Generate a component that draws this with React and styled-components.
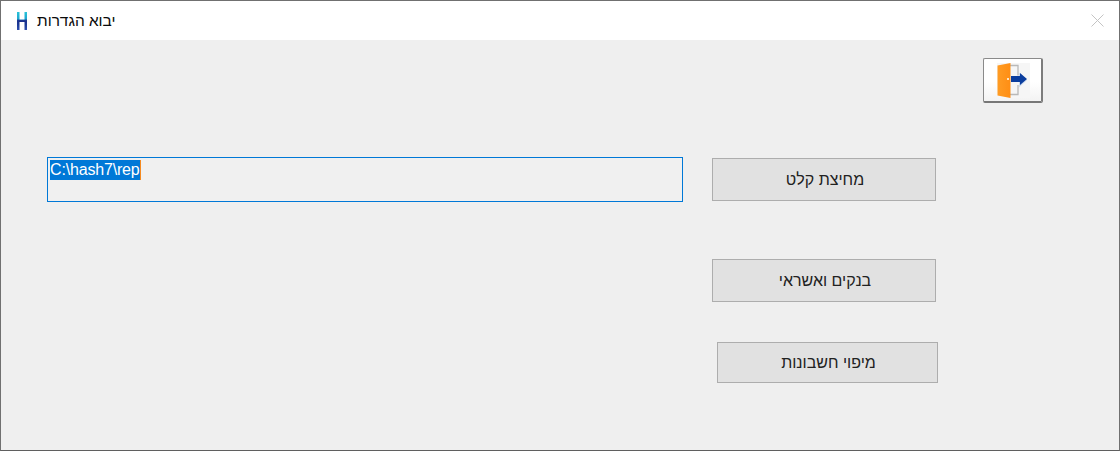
import React from "react";
import styled, { createGlobalStyle } from "styled-components";

const Global = createGlobalStyle`
  html, body { margin: 0; padding: 0; background: #efefef; }
  * { box-sizing: border-box; }
`;

const Win = styled.div`
  width: 1120px;
  height: 451px;
  border: 1px solid #707070;
  border-bottom-color: #5f5f5f;
  background: #efefef;
  display: flex;
  flex-direction: column;
  overflow: hidden;
  font-family: "Liberation Sans", "DejaVu Sans", sans-serif;
`;

const TitleBar = styled.div`
  height: 39px;
  flex: none;
  background: #fff;
  display: flex;
  align-items: center;
  padding: 0 15px 0 14px;
`;

const Logo = styled.svg`
  width: 14px;
  height: 20px;
  flex: none;
  margin-right: 8px;
`;

const Title = styled.div`
  direction: rtl;
  font-size: 15.4px;
  color: #0a0a0a;
  flex: 1;
  text-align: left;
  margin-top: 1px;
`;

const Close = styled.svg`
  width: 13px;
  height: 13px;
  flex: none;
`;

const Body = styled.div`
  flex: 1;
  display: grid;
  grid-template-columns: 636px 224px 1fr;
  grid-template-rows: 45px 43px 58px 43px 40px 41px;
  padding: 18px 0 0 46px;
  column-gap: 29px;
`;

const ExitButton = styled.button`
  grid-column: 3;
  grid-row: 1;
  justify-self: start;
  margin-left: 18px;
  width: 60px;
  height: 45px;
  padding: 0;
  display: flex;
  align-items: center;
  justify-content: center;
  border: 1px solid #8a8a8a;
  border-right: 2px solid #7c7c7c;
  border-bottom: 2px solid #777;
  border-radius: 2px;
  background: linear-gradient(#ffffff 55%, #f3f3f3);
`;

const PathField = styled.div`
  grid-column: 1;
  grid-row: 1 / span 3;
  align-self: start;
  margin-top: 99px;
  height: 45px;
  border: 1px solid #0078d7;
  background: #f0f0f0;
  padding: 2px 2px;
  font-size: 16px;
  line-height: 19px;
  letter-spacing: -0.17px;
`;

const Selected = styled.span`
  display: inline-block;
  background: #0078d7;
  color: #fff;
  height: 20px;
  border-right: 1px solid #f58a1f;
`;

const ActionButton = styled.button`
  grid-column: 2;
  grid-row: ${(p) => p.$row};
  margin-left: ${(p) => p.$shift || 0}px;
  width: ${(p) => p.$w || 224}px;
  height: ${(p) => p.$h || 43}px;
  margin-top: ${(p) => p.$top || 0}px;
  background: #e1e1e1;
  border: 1px solid #adadad;
  color: #222;
  font-family: "Liberation Sans", sans-serif;
  font-size: 16px;
  direction: rtl;
  padding: 0 0 0 2px;
`;

export default function App() {
  return (
    <Win>
      <Global />
      <TitleBar>
        <Logo viewBox="0 0 14 20">
          <defs>
            <linearGradient id="h" x1="0" y1="0" x2="0" y2="1">
              <stop offset="0" stopColor="#28c4d8" />
              <stop offset="0.38" stopColor="#1fa6cf" />
              <stop offset="0.48" stopColor="#1c2f8c" />
              <stop offset="0.7" stopColor="#1c3a96" />
              <stop offset="1" stopColor="#2f4fb0" />
            </linearGradient>
          </defs>
          <path d="M2 1h2.500v7.500h5V1H12v18H9.500v-8h-5v8H2z" fill="url(#h)" />
        </Logo>
        <Title>יבוא הגדרות</Title>
        <Close viewBox="0 0 13 13">
          <path d="M.5.5l12 12M12.500.5l-12 12" stroke="#c4c4c4" strokeWidth="1" fill="none" />
        </Close>
      </TitleBar>
      <Body>
        <ExitButton aria-label="exit">
          <svg width="34" height="38" viewBox="0 0 34 38">
            <defs>
              <linearGradient id="door" x1="0" y1="0" x2="1" y2="0">
                <stop offset="0" stopColor="#ff9c24" />
                <stop offset="1" stopColor="#ff8e14" />
              </linearGradient>
            </defs>
            <rect x="1" y="2" width="33" height="35" fill="#f6f6f6" />
            <path d="M14 4.500h8v10M22 24v9.500h-8" fill="none" stroke="#b9b9b9" strokeWidth="1.3" />
            <path d="M23 11.500l8 7.500-8 7.500" fill="#bcd0ea" opacity="0.7" />
            <path d="M1.500 4.500l13-2.500v35l-13-2.500z" fill="url(#door)" />
            <rect x="11" y="17" width="2" height="2" fill="#ffe6c2" />
            <path d="M15 15h9v-3l7 6-7 6v-3h-9z" fill="#0b3e9e" />
          </svg>
        </ExitButton>
        <PathField>
          <Selected>C:\hash7\rep</Selected>
        </PathField>
        <ActionButton $row={3} $top={12}>מחיצת קלט</ActionButton>
        <ActionButton $row={4} $top={55}>בנקים ואשראי</ActionButton>
        <ActionButton $row={5} $top={95} $shift={5} $w={221} $h={41}>מיפוי חשבונות</ActionButton>
      </Body>
    </Win>
  );
}
